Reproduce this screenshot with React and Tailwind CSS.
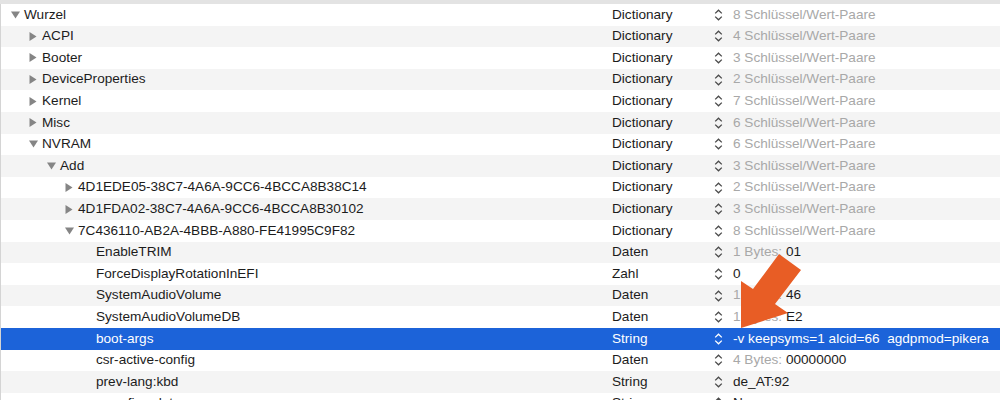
const rows = [
  { name: "Wurzel", level: 0, node: "open", type: "Dictionary", gray: "8 Schlüssel/Wert-Paare" },
  { name: "ACPI", level: 1, node: "closed", type: "Dictionary", gray: "4 Schlüssel/Wert-Paare" },
  { name: "Booter", level: 1, node: "closed", type: "Dictionary", gray: "3 Schlüssel/Wert-Paare" },
  { name: "DeviceProperties", level: 1, node: "closed", type: "Dictionary", gray: "2 Schlüssel/Wert-Paare" },
  { name: "Kernel", level: 1, node: "closed", type: "Dictionary", gray: "7 Schlüssel/Wert-Paare" },
  { name: "Misc", level: 1, node: "closed", type: "Dictionary", gray: "6 Schlüssel/Wert-Paare" },
  { name: "NVRAM", level: 1, node: "open", type: "Dictionary", gray: "6 Schlüssel/Wert-Paare" },
  { name: "Add", level: 2, node: "open", type: "Dictionary", gray: "3 Schlüssel/Wert-Paare" },
  { name: "4D1EDE05-38C7-4A6A-9CC6-4BCCA8B38C14", level: 3, node: "closed", type: "Dictionary", gray: "2 Schlüssel/Wert-Paare" },
  { name: "4D1FDA02-38C7-4A6A-9CC6-4BCCA8B30102", level: 3, node: "closed", type: "Dictionary", gray: "3 Schlüssel/Wert-Paare" },
  { name: "7C436110-AB2A-4BBB-A880-FE41995C9F82", level: 3, node: "open", type: "Dictionary", gray: "8 Schlüssel/Wert-Paare" },
  { name: "EnableTRIM", level: 4, type: "Daten", gray: "1 Bytes:", value: "01" },
  { name: "ForceDisplayRotationInEFI", level: 4, type: "Zahl", value: "0" },
  { name: "SystemAudioVolume", level: 4, type: "Daten", gray: "1 Bytes:", value: "46" },
  { name: "SystemAudioVolumeDB", level: 4, type: "Daten", gray: "1 Bytes:", value: "E2" },
  { name: "boot-args", level: 4, type: "String", value: "-v keepsyms=1 alcid=66  agdpmod=pikera", selected: true },
  { name: "csr-active-config", level: 4, type: "Daten", gray: "4 Bytes:", value: "00000000" },
  { name: "prev-lang:kbd", level: 4, type: "String", value: "de_AT:92" },
  { name: "run-efi-updater", level: 4, type: "String", value: "No" },
];

const indents = ["pl-[10px]", "pl-[28px]", "pl-[46px]", "pl-[64px]", "pl-[82px]"];

function Disclosure({ node }) {
  if (!node) return <span className="w-[13px] shrink-0" />;
  return (
    <span className="w-[13px] shrink-0 flex items-center">
      {node === "open" ? (
        <svg width="9" height="8" viewBox="0 0 9 8">
          <path d="M0 0.5 L9 0.5 L4.5 7.5 Z" fill="#858585" />
        </svg>
      ) : (
        <svg width="8" height="9" viewBox="0 0 8 9">
          <path d="M0.5 0 L7.5 4.5 L0.5 9 Z" fill="#858585" />
        </svg>
      )}
    </span>
  );
}

function Stepper({ selected }) {
  const c = selected ? "#ffffff" : "#4a4a4a";
  return (
    <svg width="9" height="12" viewBox="0 0 9 12" className="shrink-0">
      <path d="M1.2 4.4 L4.5 1.2 L7.8 4.4" fill="none" stroke={c} strokeWidth="1.3" />
      <path d="M1.2 7.6 L4.5 10.8 L7.8 7.6" fill="none" stroke={c} strokeWidth="1.3" />
    </svg>
  );
}

export default function App() {
  return (
    <div
      className="relative w-[1000px] h-[400px] overflow-hidden bg-white text-[13.6px] text-[#1c1c1c]"
      style={{ fontFamily: '"Liberation Sans", Arial, sans-serif' }}
    >
      <div className="h-[4px] bg-[#e3e3e3]" />
      <div className="border-l border-[#d4d4d4]">
        {rows.map((row, i) => (
          <div
            key={i}
            className={`flex items-center h-[21.6px] ${
              row.selected
                ? "bg-[#1c63d9] text-white"
                : i % 2 === 1
                ? "bg-[#f4f4f4]"
                : "bg-white"
            }`}
          >
            <div className={`w-[611px] shrink-0 flex items-center whitespace-nowrap ${indents[row.level]}`}>
              <Disclosure node={row.node} />
              <span>{row.name}</span>
            </div>
            <div className="w-[102px] shrink-0">{row.type}</div>
            <Stepper selected={row.selected} />
            <div className="pl-[10px] whitespace-pre">
              {row.gray && <span className="text-[#a8a8a8]">{row.gray}</span>}
              {row.gray && row.value && " "}
              {row.value && <span>{row.value}</span>}
            </div>
          </div>
        ))}
      </div>
      <svg
        className="absolute left-0 top-0 pointer-events-none"
        width="1000"
        height="400"
        viewBox="0 0 1000 400"
      >
        <polygon
          points="779,254 801,270 775,304 788,313 741,328 741,281 753,289"
          fill="#e85d25"
        />
      </svg>
    </div>
  );
}
